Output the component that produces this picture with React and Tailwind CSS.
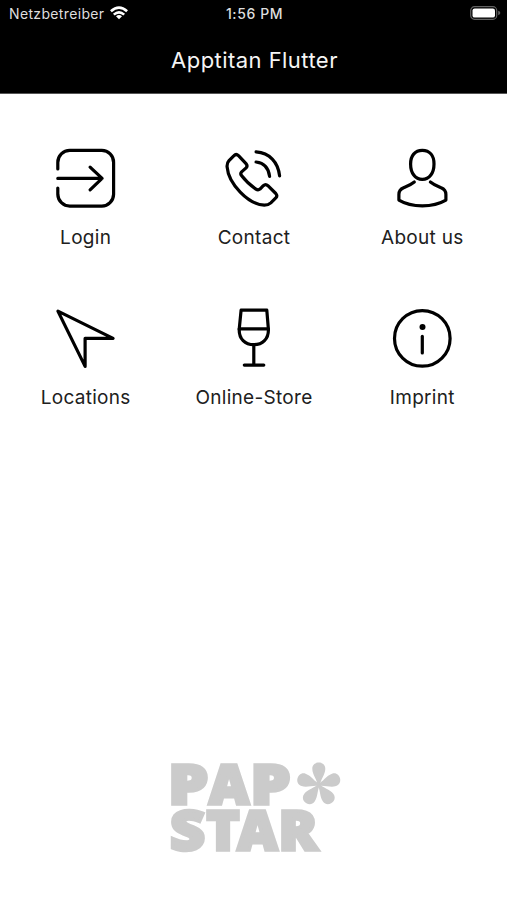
import React from 'react';

const LoginIcon = () => (
    <>
        <path d="M2.5 20.5V14A12 12 0 0 1 14.5 2H46.5A12 12 0 0 1 58.3 14V46A12 12 0 0 1 46.5 57.7H14.5A12 12 0 0 1 2.5 46V39.7" />
        <path d="M2.5 30H46.5M34.8 18.7L46.8 30L34.8 41.5" />
    </>
);

const ContactIcon = () => (
    <>
        <path d="M10.7 7.2L5.7 12.2Q3.5 14.5 3.8 18.5C5.2 35.5 25 56 41 56.8Q45 56.8 47.5 54.5L52.5 49.5Q54.5 47.3 52.5 45.1L44.6 37.3Q42.3 35.2 40 37.3L36.7 40.7Q34.8 42.2 32.6 40.7C27 37 21.5 31.5 18 26.9Q16.8 25.1 18.3 23.5L22.8 19.5Q24.7 17.5 22.7 15.2L15.2 7.2Q12.8 5 10.7 7.2Z" />
        <path d="M32.8 3.5C46.2 4.5 54.8 13.5 56.3 27.5M32.8 13.6C40.8 14.5 45.3 19.5 46.3 28" />
    </>
);

const AboutIcon = () => (
    <>
        <path d="M30 2C22.5 2 18.3 7.5 18.3 15.5C18.3 24.5 22.8 31 30 31S41.7 24.5 41.7 15.5C41.7 7.5 37.5 2 30 2Z" />
        <path d="M22 33.5C18.3 36.5 14.8 37.8 11.3 39.3Q6.6 41.2 6.6 46V51.7C19.3 59.3 40.7 59.3 53.6 51.7V46Q53.6 41.2 48.8 39.3C45.3 37.8 41.8 36.5 38.1 33.5" />
    </>
);

const LocationsIcon = () => <path d="M2.6 2.7L57.8 30H29.8V58Z" />;

const StoreIcon = () => (
    <>
        <path d="M17.8 1.8H43.5L45.1 21C45.3 30.5 39.3 36.3 30.5 36.3S15.7 30.5 15.9 21Z" />
        <path d="M15.9 20.5H45.1M30.5 36.3V56.7M21 56.7H40.5" />
    </>
);

const ImprintIcon = () => (
    <>
        <circle cx="30" cy="30" r="27.8" />
        <path d="M30 28V44.5" />
        <circle cx="30.2" cy="18.6" r="3" fill="currentColor" stroke="none" />
    </>
);

const menuItems = [
    { label: 'Login', icon: LoginIcon },
    { label: 'Contact', icon: ContactIcon },
    { label: 'About us', icon: AboutIcon },
    { label: 'Locations', icon: LocationsIcon },
    { label: 'Online-Store', icon: StoreIcon },
    { label: 'Imprint', icon: ImprintIcon },
];

const StatusBar = () => (
    <div className="grid h-7 grid-cols-3 items-center pl-[9px] pr-[6px] text-[#dedede]">
        <div className="flex items-center gap-[6px]">
            <span className="-mt-0.5 text-[14px] tracking-[0.35px]">Netzbetreiber</span>
            <svg width="18" height="14" viewBox="0 0 18 14" className="-mt-0.5 shrink-0" fill="none" stroke="#fff" strokeWidth="2.6">
                <path d="M0.9 5.3Q9 -2.2 17.1 5.3M3.8 8.6Q9 4 14.2 8.6" />
                <path d="M9 13.2L6 10.3Q9 7.8 12 10.3Z" fill="#fff" stroke="none" />
            </svg>
        </div>
        <span className="-ml-px -mt-0.5 text-center text-[14px] font-medium tracking-[0.6px]">1:56 PM</span>
        <svg width="31" height="14" viewBox="0 0 31 14" className="-mt-0.5 justify-self-end">
            <rect x="0.7" y="0.7" width="26" height="12.6" rx="3.8" fill="none" stroke="#626262" strokeWidth="1.2" />
            <rect x="2.5" y="2.4" width="22.5" height="9.2" rx="2.2" fill="#fff" />
            <path d="M28.2 4.8Q30.3 5.4 30.3 7T28.2 9.2Z" fill="#626262" />
        </svg>
    </div>
);

const Logo = () => (
    <svg width="180" height="130" viewBox="0 0 180 130" fill="#cbcbcb" stroke="#cbcbcb" className="font-['Open_Sans',sans-serif] text-[55px] font-extrabold">
        <g strokeWidth="3.4" strokeLinejoin="miter">
            <text y="59" lengthAdjust="spacingAndGlyphs">
                <tspan x="4.3" textLength="40" lengthAdjust="spacingAndGlyphs">P</tspan>
                <tspan x="45" textLength="40" lengthAdjust="spacingAndGlyphs">A</tspan>
                <tspan x="86.5" textLength="40" lengthAdjust="spacingAndGlyphs">P</tspan>
            </text>
            <text y="104.5">
                <tspan x="6" textLength="35" lengthAdjust="spacingAndGlyphs">S</tspan>
                <tspan x="42.5" textLength="33" lengthAdjust="spacingAndGlyphs">T</tspan>
                <tspan x="73.5" textLength="40" lengthAdjust="spacingAndGlyphs">A</tspan>
                <tspan x="114.5" textLength="39" lengthAdjust="spacingAndGlyphs">R</tspan>
            </text>
        </g>
        {/* flower asterisk */}
        <g stroke="none" transform="translate(154.8 39.8)">
            {[0, 72, 144, 216, 288].map((angle) => (
                <path key={angle} transform={`rotate(${angle})`} d="M-1 1C-1.5 -5 -6.5 -10 -6.5 -16C-6.5 -24.3 6.5 -24.3 6.5 -16C6.5 -10 1.5 -5 1 1Z" />
            ))}
        </g>
    </svg>
);

const App = () => {
    return (
        <div className="flex h-[900px] w-[507px] flex-col overflow-hidden bg-white font-[Inter,sans-serif]">
            <header className="h-[94px] shrink-0 border-b border-[#555] bg-black text-white">
                <StatusBar />
                <h1 className="mt-[16px] pl-[2px] text-center text-[22px] leading-8 tracking-[0.45px] text-[#f5f5f5]">Apptitan Flutter</h1>
            </header>

            <main className="grid grid-cols-3 gap-y-[70px] px-px pt-[54px]">
                {menuItems.map(({ label, icon: Icon }) => (
                    <button key={label} className="flex h-[90px] flex-col items-center text-black">
                        <svg width="60" height="60" viewBox="-0.3 -0.4 60 60" className="overflow-visible" fill="none" stroke="currentColor" strokeWidth="3.2" strokeLinecap="round" strokeLinejoin="round">
                            <Icon />
                        </svg>
                        <span className="mt-[16px] whitespace-nowrap pl-px text-[19px] leading-7 tracking-[0.3px] text-[#202020]">{label}</span>
                    </button>
                ))}
            </main>

            <footer className="mt-auto flex justify-center pb-[25px]">
                <Logo />
            </footer>
        </div>
    );
};

export default App;
